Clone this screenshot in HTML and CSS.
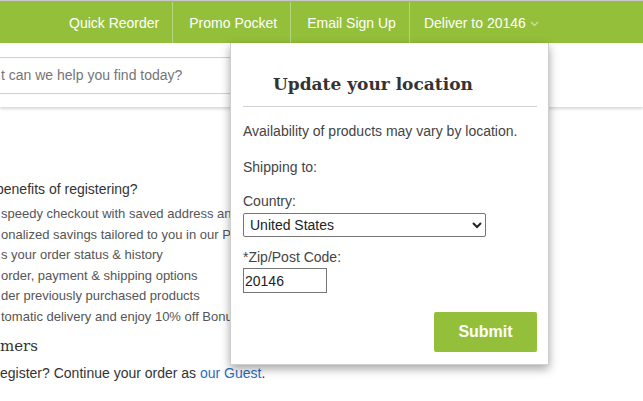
FILE: index.html
```html
<!DOCTYPE html>
<html>
<head>
<meta charset="utf-8">
<link rel="stylesheet" href="styles.css">
</head>
<body>
<div class="topbar">
  <nav class="nav">
    <a class="nav-item">Quick Reorder</a>
    <a class="nav-item">Promo Pocket</a>
    <a class="nav-item">Email Sign Up</a>
    <a class="nav-item deliver">Deliver to 20146
      <svg class="chev" width="9" height="6" viewBox="0 0 9 6"><polyline points="1,1 4.5,4.5 8,1" fill="none" stroke="#c9e09c" stroke-width="1.4"/></svg>
    </a>
  </nav>
</div>
<div class="header">
  <div class="search">t can we help you find today?</div>
</div>
<main class="content">
  <h3 class="benefits">benefits of registering?</h3>
  <ul class="list">
    <li>speedy checkout with saved address and payment information</li>
    <li>onalized savings tailored to you in our Promo Pocket</li>
    <li>s your order status &amp; history</li>
    <li>order, payment &amp; shipping options</li>
    <li>der previously purchased products</li>
    <li>tomatic delivery and enjoy 10% off Bonus Buys</li>
  </ul>
  <h2 class="guest-title">mers</h2>
  <p class="guest">egister? Continue your order as <a class="link">our Guest</a>.</p>
</main>

<div class="popup">
  <h2 class="popup-title">Update your location</h2>
  <p class="p-text first">Availability of products may vary by location.</p>
  <p class="p-text ship">Shipping to:</p>
  <label class="p-text lbl">Country:</label>
  <select class="country"><option>United States</option></select>
  <label class="p-text lbl zip-lbl">*Zip/Post Code:</label>
  <input class="zip" type="text" value="20146">
  <div class="actions"><button class="submit">Submit</button></div>
</div>
</body>
</html>
```

FILE: styles.css
```css
* { box-sizing: border-box; }
body {
  margin: 0;
  font-family: "Liberation Sans", Arial, sans-serif;
  font-size: 14px;
  background: #fff;
  color: #555;
  overflow: hidden;
}
.topbar {
  height: 43px;
  background: #93bf3b;
  border-top: 1px solid #c8c8c8;
}
.nav {
  display: flex;
  height: 42px;
  padding-left: 54px;
  align-items: stretch;
}
.nav-item {
  display: flex;
  align-items: center;
  padding: 0 13px 0 15px;
  color: #fff;
  font-size: 14px;
  border-left: 1px solid #b6d67c;
  margin: 1px 0 0;
}
.nav-item:first-child { border-left: none; }
.nav-item:nth-child(2), .nav-item:nth-child(3) { padding-left: 16px; }
.deliver { padding-left: 14px; }
.chev { margin-left: 4px; margin-top: 2px; }

.header {
  height: 64px;
  background: #fff;
  box-shadow: 0 2px 3px rgba(0,0,0,0.16);
  padding-top: 14px;
  position: relative;
}
.search {
  width: 240px;
  height: 37px;
  border-top: 1px solid #cfcfcf;
  border-bottom: 1px solid #cfcfcf;
  color: #757575;
  line-height: 35px;
  padding-left: 1px;
}

.content { padding-top: 72px; }
.benefits {
  margin: 0;
  font-size: 14px;
  font-weight: normal;
  color: #333;
  line-height: 20px;
  margin-left: -4px;
  white-space: nowrap;
}
.list {
  list-style: none;
  margin: 5px 0 0;
  padding: 0;
  color: #555;
  font-size: 13px;
  line-height: 20.6px;
  white-space: nowrap;
}
.list li { padding-left: 1px; }
.guest-title {
  margin: 6px 0 0;
  font-family: "DejaVu Serif", serif;
  font-weight: normal;
  font-size: 15px;
  line-height: 24px;
  color: #333;
}
.guest {
  margin: 5px 0 0;
  color: #333;
  line-height: 20px;
}
.link { color: #2a6dbf; }

.popup {
  position: absolute;
  left: 230px;
  top: 43px;
  width: 319px;
  height: 322px;
  background: #fff;
  border: 1px solid #cfcfcf;
  border-top: none;
  box-shadow: 0 4px 9px rgba(0,0,0,0.35);
  padding: 0 11px 11px 12px;
  display: flex;
  flex-direction: column;
  align-items: flex-start;
  color: #444;
}
.popup-title {
  align-self: stretch;
  margin: 0;
  padding: 29px 0 10px 30px;
  font-family: "DejaVu Serif", serif;
  font-weight: bold;
  font-size: 17px;
  line-height: 24px;
  color: #333;
  border-bottom: 1px solid #d0d0d0;
}
.p-text {
  margin: 0;
  line-height: 16px;
  font-size: 14px;
  display: block;
}
.first { margin-top: 16px; }
.ship { margin-top: 20px; }
.lbl { margin-top: 18px; }
.zip-lbl { margin-top: 12px; }
.country {
  margin-top: 4px;
  width: 243px;
  height: 24px;
  font-family: "Liberation Sans", Arial, sans-serif;
  font-size: 14px;
  color: #222;
  border: 1px solid #767676;
  border-radius: 2px;
  background: #fff;
  padding: 0 2px;
}
.zip {
  margin-top: 3px;
  width: 84px;
  height: 25px;
  font-family: "Liberation Sans", Arial, sans-serif;
  font-size: 14px;
  color: #222;
  border: 1px solid #767676;
  padding: 0 1px;
}
.actions {
  align-self: stretch;
  display: flex;
  justify-content: flex-end;
  margin-top: 19px;
}
.submit {
  width: 103px;
  height: 40px;
  background: #93bf3b;
  color: #fff;
  border: none;
  border-radius: 2px;
  font-family: "Liberation Sans", Arial, sans-serif;
  font-weight: bold;
  font-size: 16px;
}
```
